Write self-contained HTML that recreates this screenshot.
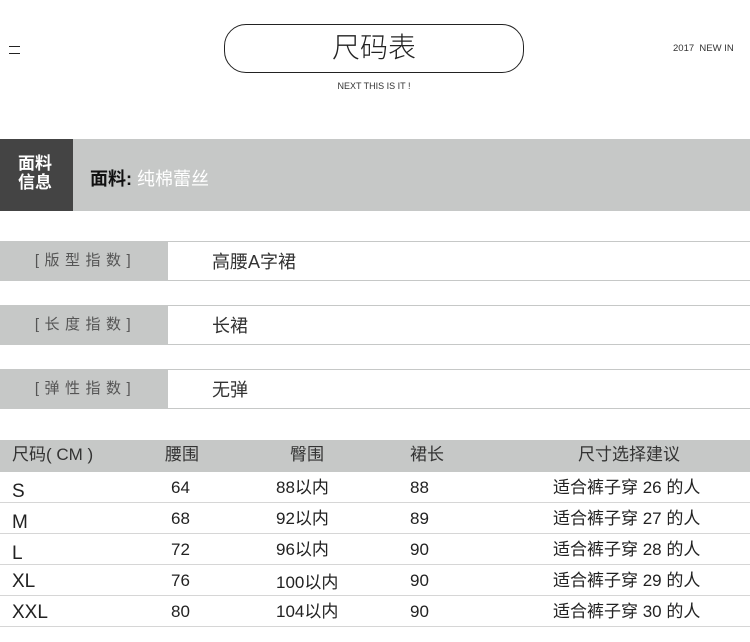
<!DOCTYPE html>
<html><head><meta charset="utf-8"><style>
*{margin:0;padding:0;box-sizing:border-box}
body{width:750px;height:642px;background:#fff;position:relative;overflow:hidden;font-family:"Liberation Sans","Noto Sans CJK SC",sans-serif;color:#222}
.a{position:absolute}
.t{position:absolute;white-space:nowrap}
.g{background:#c6c8c7}
.spec{position:absolute;left:0;width:750px;height:40px}
.spec .l{position:absolute;left:0;top:0;width:168px;height:40px;background:#c6c8c7;color:#555;font-size:15px;line-height:40px;text-align:center;letter-spacing:5.5px;padding-left:3px}
.spec .r{position:absolute;left:168px;top:0;width:582px;height:40px;border-top:1px solid #c6c8c7;border-bottom:1px solid #c6c8c7;font-size:18px;line-height:40px;padding-left:44px;color:#333}
.row{position:absolute;left:0;width:750px;height:31px;border-bottom:1px solid #d6d6d6;font-size:17px;line-height:31px;color:#222}
.row span{position:absolute}
</style></head><body>
<div class="a" style="left:9px;top:46px;width:11px;height:1px;background:#222"></div>
<div class="a" style="left:9px;top:53px;width:11px;height:1px;background:#222"></div>
<div class="a" style="left:224px;top:24px;width:300px;height:49px;border:1.3px solid #222;border-radius:22px"></div>
<div class="t" style="left:224px;width:300px;top:29px;text-align:center;font-size:28px;line-height:38px;font-weight:300;color:#222">尺码表</div>
<div class="t" style="left:224px;width:300px;top:81px;text-align:center;font-size:9px;color:#333">NEXT THIS IS IT !</div>
<div class="t" style="left:673px;top:43px;font-size:9.5px;color:#333">2017&nbsp; NEW IN</div>
<div class="a g" style="left:0;top:139px;width:750px;height:72px"></div>
<div class="a" style="left:0;top:139px;width:73px;height:72px;background:#444"></div>
<div class="t" style="left:18px;top:154px;font-size:17px;line-height:19px;color:#fff;font-weight:bold">面料<br>信息</div>
<div class="t" style="left:90px;top:165px;font-size:18px;font-weight:bold;color:#111">面料: <span style="color:#fff;font-weight:normal">纯棉蕾丝</span></div>
<div class="spec" style="top:241px"><div class="l">[版型指数]</div><div class="r">高腰A字裙</div></div>
<div class="spec" style="top:305px"><div class="l">[长度指数]</div><div class="r">长裙</div></div>
<div class="spec" style="top:369px"><div class="l">[弹性指数]</div><div class="r">无弹</div></div>
<div class="a g" style="left:0;top:440px;width:750px;height:32px"></div>
<div class="row" style="top:440px;border:none;height:32px;line-height:30px;font-size:17px;color:#333">
<span style="left:12px">尺码( CM )</span><span style="left:165px">腰围</span><span style="left:290px">臀围</span><span style="left:410px">裙长</span><span style="left:578px">尺寸选择建议</span></div>
<div class="row" style="top:472px"><span style="left:12px;font-size:19px;top:4px">S</span><span style="left:171px">64</span><span style="left:276px">88以内</span><span style="left:410px">88</span><span style="left:553px">适合裤子穿 26 的人</span></div>
<div class="row" style="top:503px"><span style="left:12px;font-size:19px;top:4px">M</span><span style="left:171px">68</span><span style="left:276px">92以内</span><span style="left:410px">89</span><span style="left:553px">适合裤子穿 27 的人</span></div>
<div class="row" style="top:534px"><span style="left:12px;font-size:19px;top:4px">L</span><span style="left:171px">72</span><span style="left:276px">96以内</span><span style="left:410px">90</span><span style="left:553px">适合裤子穿 28 的人</span></div>
<div class="row" style="top:565px"><span style="left:12px;font-size:19px;top:1px">XL</span><span style="left:171px">76</span><span style="left:276px;top:2px">100以内</span><span style="left:410px">90</span><span style="left:553px">适合裤子穿 29 的人</span></div>
<div class="row" style="top:596px"><span style="left:12px;font-size:19px;top:1px">XXL</span><span style="left:171px">80</span><span style="left:276px">104以内</span><span style="left:410px">90</span><span style="left:553px">适合裤子穿 30 的人</span></div>
</body></html>
